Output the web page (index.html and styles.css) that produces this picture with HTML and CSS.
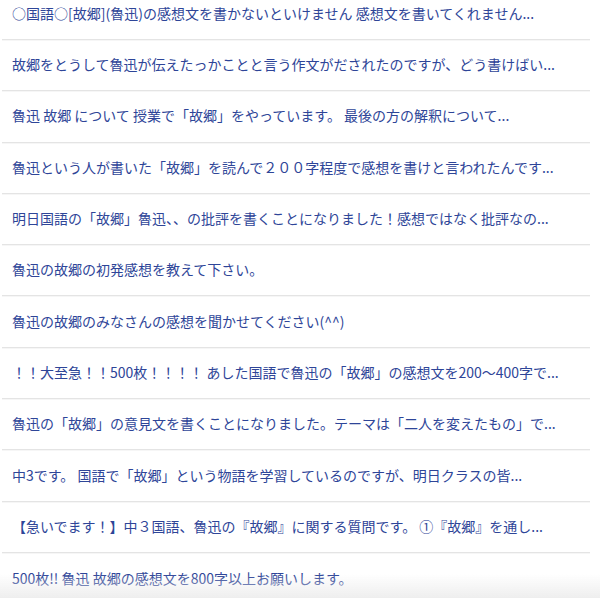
FILE: index.html
```html
<!DOCTYPE html>
<html lang="ja">
<head>
    <meta charset="UTF-8">
    <meta name="viewport" content="width=device-width, initial-scale=1.0">
    <title>故郷 感想文</title>
    <link rel="stylesheet" href="styles.css">
</head>
<body>

    <ul class="qa-list">
        <li><a href="#">○国語○[故郷](魯迅)の感想文を書かないといけません 感想文を書いてくれません...</a></li>
        <li><a href="#">故郷をとうして魯迅が伝えたっかことと言う作文がだされたのですが、どう書けばい...</a></li>
        <li><a href="#">魯迅 故郷 について 授業で「故郷」をやっています。 最後の方の解釈について...</a></li>
        <li><a href="#">魯迅という人が書いた「故郷」を読んで２００字程度で感想を書けと言われたんです...</a></li>
        <li><a href="#">明日国語の「故郷」魯迅、、の批評を書くことになりました！感想ではなく批評なの...</a></li>
        <li><a href="#">魯迅の故郷の初発感想を教えて下さい。</a></li>
        <li><a href="#">魯迅の故郷のみなさんの感想を聞かせてください(^^)</a></li>
        <li><a href="#">！！大至急！！500枚！！！！ あした国語で魯迅の「故郷」の感想文を200〜400字で...</a></li>
        <li><a href="#">魯迅の「故郷」の意見文を書くことになりました。テーマは「二人を変えたもの」で...</a></li>
        <li><a href="#">中3です。 国語で「故郷」という物語を学習しているのですが、明日クラスの皆...</a></li>
        <li><a href="#">【急いでます！】中３国語、魯迅の『故郷』に関する質問です。 ①『故郷』を通し...</a></li>
        <li><a href="#">500枚!! 魯迅 故郷の感想文を800字以上お願いします。</a></li>
    </ul>

    <div class="fade"></div>

</body>
</html>
```

FILE: styles.css
```css
body {
    margin: 0;
    background-color: #ffffff;
    font-family: "Noto Sans CJK JP", "Noto Sans", sans-serif;
    overflow: hidden;
}

.qa-list {
    list-style: none;
    margin: -11.3px 0 0 2px;
    padding: 0;
    width: 588px;
}

.qa-list li {
    display: flex;
    align-items: center;
    box-sizing: border-box;
    height: 51.3px;
    padding: 0 0 2px 10px;
    border-bottom: 1px solid #e4e4e4;
    box-shadow: 0 1px 0 #f6f6f6;
}

.qa-list li:last-child {
    border-bottom: none;
    box-shadow: none;
}

.qa-list a {
    color: #2e4598;
    font-size: 14px;
    text-decoration: none;
    white-space: nowrap;
}

.fade {
    position: fixed;
    left: 0;
    right: 0;
    bottom: 0;
    height: 24px;
    background: linear-gradient(to bottom, rgba(236, 236, 236, 0), rgba(234, 234, 234, 0.8));
    pointer-events: none;
}
```
